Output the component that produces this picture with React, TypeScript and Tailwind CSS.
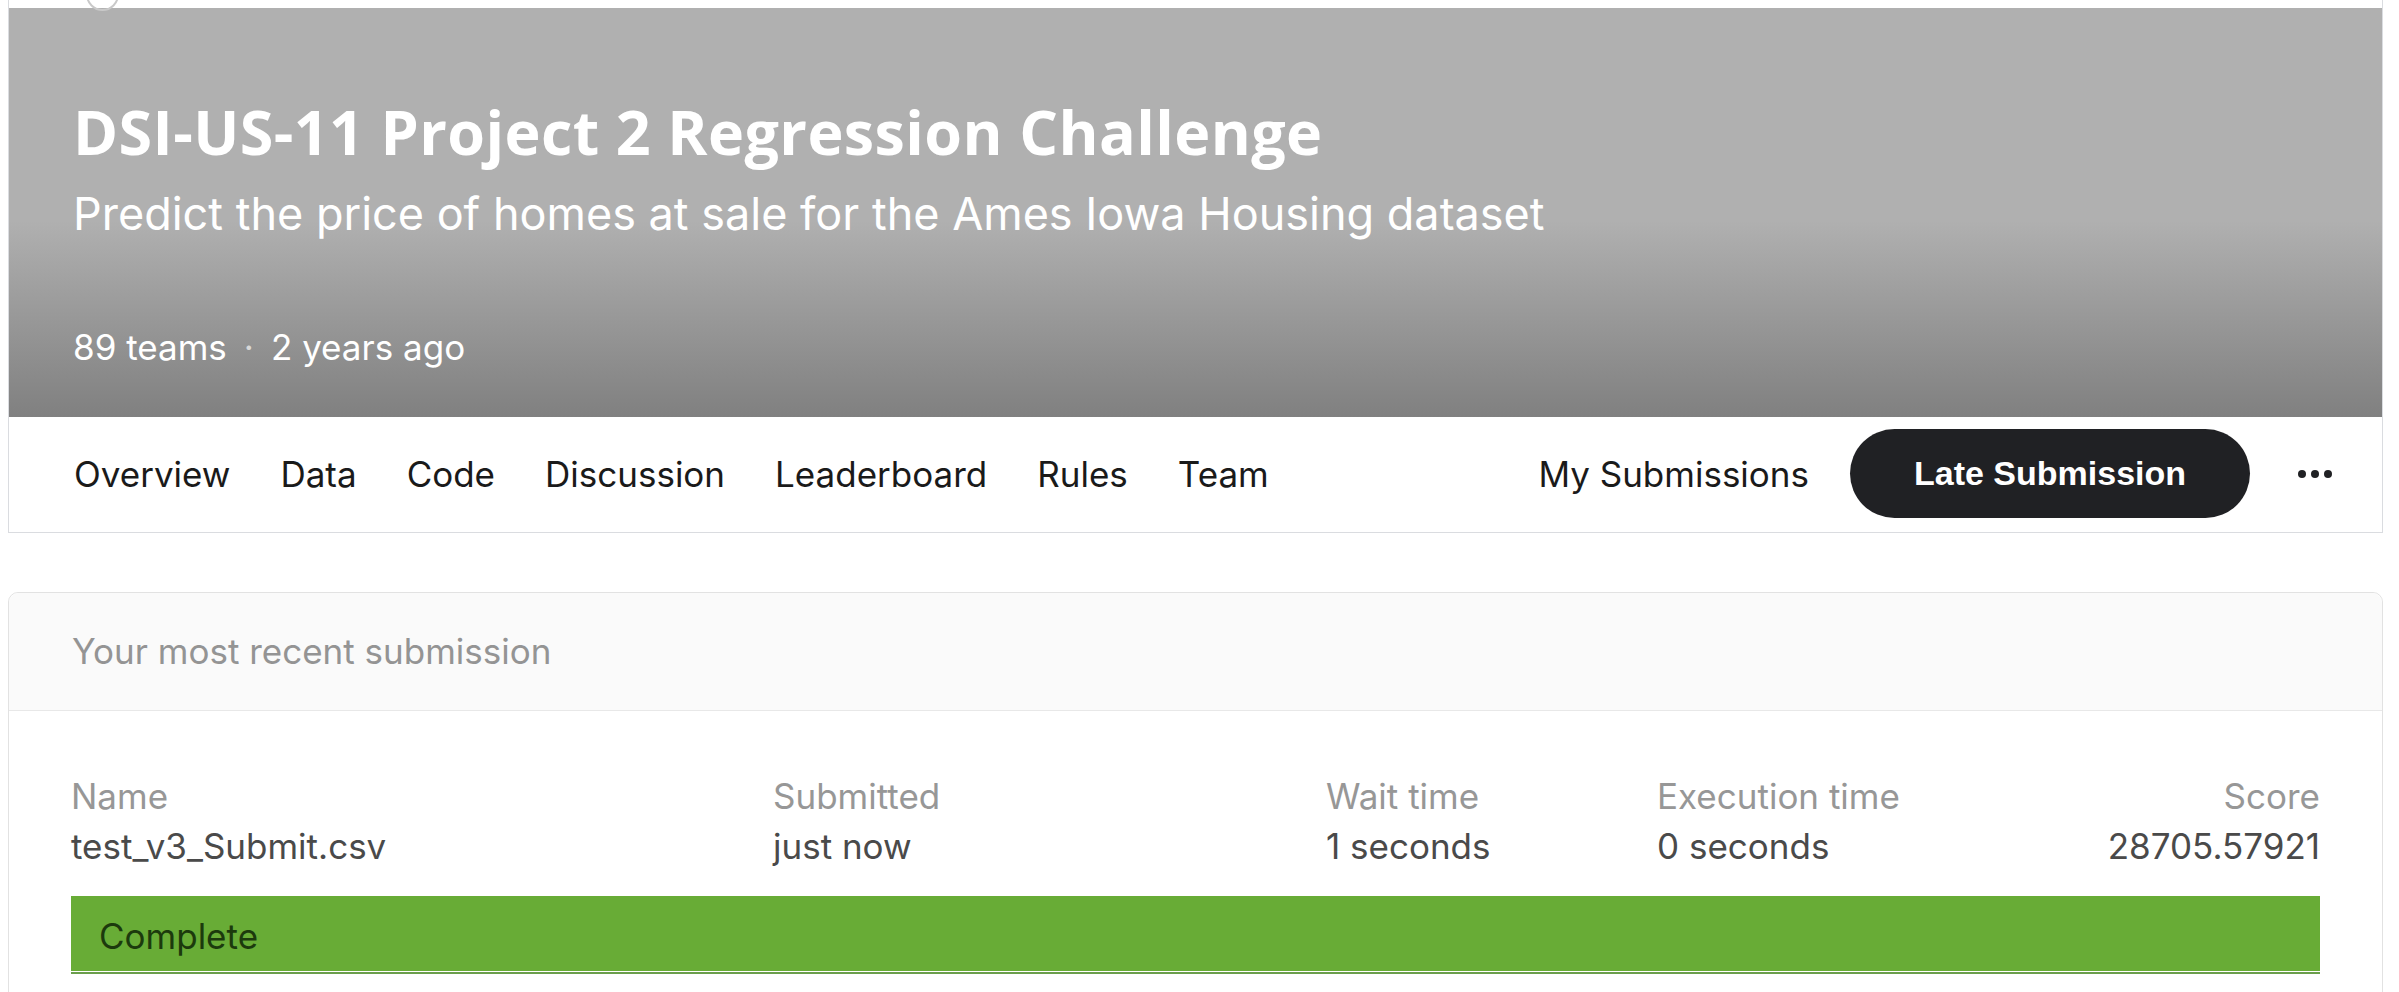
const tabs = ["Overview", "Data", "Code", "Discussion", "Leaderboard", "Rules", "Team"];

const submission = {
    name: "test_v3_Submit.csv",
    submitted: "just now",
    waitTime: "1 seconds",
    executionTime: "0 seconds",
    score: "28705.57921",
    status: "Complete",
};

const CompetitionHeader = () => {
    return (
        <div className="relative border-x border-b border-[#dadce0] bg-white pt-[8px]">
            {/* avatar of the top bar, mostly scrolled out of view */}
            <div className="absolute left-[77px] top-[-22px] h-[33px] w-[33px] rounded-full border-2 border-[#c9c9c9]" />
            <div className="bg-[linear-gradient(to_bottom,#b0b0b0_0%,#b0b0b0_52%,#808080_100%)] pl-[64px] pt-[94px] pb-[50px]">
                <h1 className="font-['Open_Sans',sans-serif] text-[61px] font-bold leading-[60px] tracking-[0.4px] text-white">
                    DSI-US-11 Project 2 Regression Challenge
                </h1>
                <p className="mt-[24px] text-[45px] leading-[56px] text-white">
                    Predict the price of homes at sale for the Ames Iowa Housing dataset
                </p>
                <div className="mt-[85px] flex items-center text-[35px] leading-[40px] text-white">
                    <span>89 teams</span>
                    <span className="mx-[17px] text-[#d8d8d8]">·</span>
                    <span>2 years ago</span>
                </div>
            </div>
            <div className="flex h-[115px] items-center pb-[2px] pl-[65px] pr-[50px]">
                <nav className="flex items-center gap-[50px] text-[35px] leading-[40px] text-[#1a1a1a]">
                    {tabs.map((tab) => (
                        <a key={tab} href="#" className="whitespace-nowrap">
                            {tab}
                        </a>
                    ))}
                </nav>
                <div className="ml-auto flex items-center">
                    <a href="#" className="text-[35px] leading-[40px] text-[#1a1a1a]">My Submissions</a>
                    <button className="ml-[41px] flex h-[89px] w-[400px] items-center justify-center rounded-full bg-[#202124] font-['Liberation_Sans',Arial,sans-serif] text-[34px] font-bold text-white">
                        Late Submission
                    </button>
                    <button className="ml-[48px] flex items-center gap-[5px]">
                        <span className="h-[8px] w-[8px] rounded-full bg-[#202124]" />
                        <span className="h-[8px] w-[8px] rounded-full bg-[#202124]" />
                        <span className="h-[8px] w-[8px] rounded-full bg-[#202124]" />
                    </button>
                </div>
            </div>
        </div>
    );
};

const Field = ({ label, value, right }: { label: string; value: string; right?: boolean }) => (
    <div className={right ? "text-right" : ""}>
        <div className="text-[35px] leading-[50px] text-[#979797]">{label}</div>
        <div className="text-[35px] leading-[50px] text-[#4a4a4a]">{value}</div>
    </div>
);

const RecentSubmission = () => {
    return (
        <div className="mt-[59px] rounded-t-[10px] border border-[#e2e2e2] bg-white">
            <div className="flex h-[118px] items-center rounded-t-[10px] border-b border-[#e8e8e8] bg-[#fafafa] px-[63px] pb-[2px]">
                <span className="text-[35px] leading-[40px] text-[#949494]">Your most recent submission</span>
            </div>
            <div className="px-[62px] pt-[60px] pb-[40px]">
                <div className="flex">
                    <div className="w-[702px]">
                        <Field label="Name" value={submission.name} />
                    </div>
                    <div className="w-[553px]">
                        <Field label="Submitted" value={submission.submitted} />
                    </div>
                    <div className="w-[331px]">
                        <Field label="Wait time" value={submission.waitTime} />
                    </div>
                    <div className="flex-1">
                        <Field label="Execution time" value={submission.executionTime} />
                    </div>
                    <div>
                        <Field label="Score" value={submission.score} right />
                    </div>
                </div>
                <div className="mt-[25px]">
                    <div className="h-[75px] bg-[#68ac36] pl-[28px] pt-[20px] text-[35px] leading-[40px] text-[#1c3a0d]">
                        {submission.status}
                    </div>
                    <div className="mt-[1px] h-[2px] bg-[#6b9e4c]" />
                </div>
            </div>
        </div>
    );
};

const App = () => {
    return (
        <div className="min-h-screen bg-white pl-[8px] pr-[16px] font-['Inter','Noto_Sans',sans-serif]">
            <CompetitionHeader />
            <RecentSubmission />
        </div>
    );
};

export default App;
